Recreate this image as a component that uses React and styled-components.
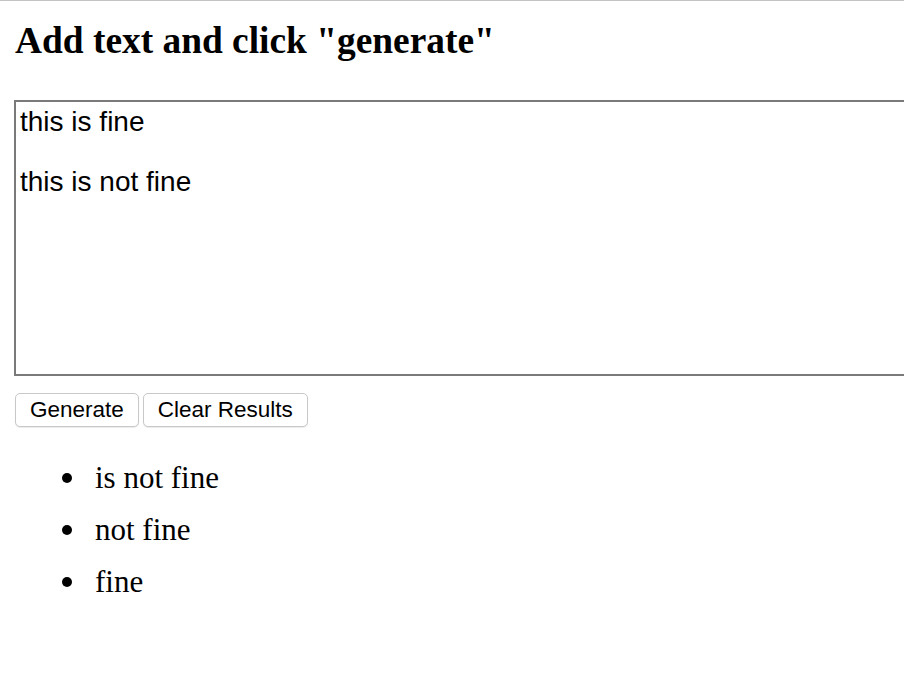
import React from 'react';
import styled, { createGlobalStyle } from 'styled-components';

const GlobalStyle = createGlobalStyle`
  html, body {
    margin: 0;
    padding: 0;
    background: #fff;
    overflow: hidden;
  }
  body {
    border-top: 1px solid #c4c4c4;
  }
`;

const Page = styled.div`
  padding: 0 0 0 15px;
  overflow: hidden;
`;

const Title = styled.h1`
  font-family: "Liberation Serif", "Times New Roman", serif;
  font-size: 37.4px;
  font-weight: bold;
  margin: 0;
  padding-top: 19px;
  line-height: 42px;
  color: #000;
`;

const Editor = styled.textarea`
  display: block;
  box-sizing: border-box;
  margin-top: 38px;
  margin-left: -1px;
  width: calc(100% + 100px);
  height: 276px;
  border: 2px solid #7a7a7a;
  padding: 5px 4px 4px;
  font-family: "Liberation Sans", Arial, sans-serif;
  font-size: 28px;
  line-height: 30px;
  color: #000;
  resize: none;
  outline: none;
`;

const Actions = styled.div`
  display: flex;
  gap: 4px;
  margin-top: 17px;
`;

const Button = styled.button`
  font-family: "Liberation Sans", Arial, sans-serif;
  font-size: 22.5px;
  height: 34px;
  padding: 0 14px;
  background: #fff;
  border: 1px solid #c8c8c8;
  border-radius: 5px;
  color: #000;
  box-shadow: 0 1px 1px rgba(0, 0, 0, 0.08);
`;

const Results = styled.ul`
  list-style: none;
  margin: 25px 0 0;
  padding-left: 80px;
  font-family: "Liberation Serif", "Times New Roman", serif;
  font-size: 31px;
  line-height: 52px;
  color: #000;
`;

const Item = styled.li`
  position: relative;

  &::before {
    content: '';
    position: absolute;
    left: -33px;
    top: 50%;
    width: 10px;
    height: 10px;
    margin-top: -5px;
    border-radius: 50%;
    background: #000;
  }
`;

export default function App() {
  const results = ['is not fine', 'not fine', 'fine'];
  return (
    <>
      <GlobalStyle />
      <Page>
        <Title>Add text and click "generate"</Title>
        <Editor defaultValue={'this is fine\n\nthis is not fine'} />
        <Actions>
          <Button>Generate</Button>
          <Button>Clear Results</Button>
        </Actions>
        <Results>
          {results.map((r) => (
            <Item key={r}>{r}</Item>
          ))}
        </Results>
      </Page>
    </>
  );
}
